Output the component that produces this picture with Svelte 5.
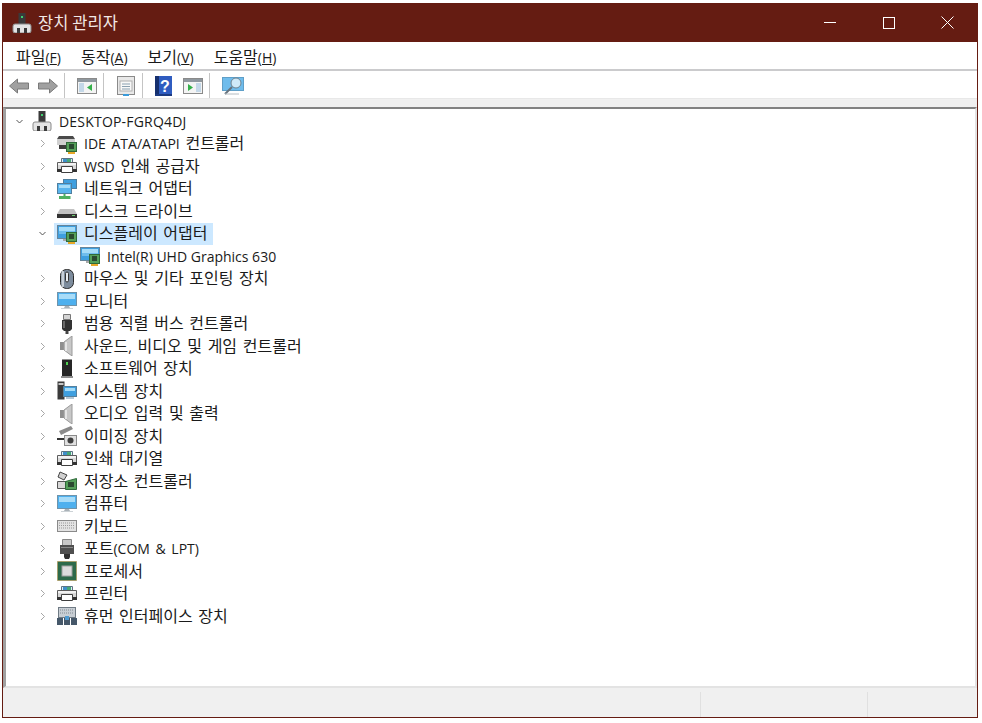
<svelte:options runes={true} />

<script>
  const devices = [
    { label: 'IDE ATA/ATAPI 컨트롤러', icon: 'ide' },
    { label: 'WSD 인쇄 공급자', icon: 'printer' },
    { label: '네트워크 어댑터', icon: 'network' },
    { label: '디스크 드라이브', icon: 'disk' },
    { label: '디스플레이 어댑터', icon: 'display', open: true, selected: true },
    { label: 'Intel(R) UHD Graphics 630', icon: 'display', child: true },
    { label: '마우스 및 기타 포인팅 장치', icon: 'mouse' },
    { label: '모니터', icon: 'monitor' },
    { label: '범용 직렬 버스 컨트롤러', icon: 'usb' },
    { label: '사운드, 비디오 및 게임 컨트롤러', icon: 'speaker' },
    { label: '소프트웨어 장치', icon: 'software' },
    { label: '시스템 장치', icon: 'system' },
    { label: '오디오 입력 및 출력', icon: 'speaker' },
    { label: '이미징 장치', icon: 'camera' },
    { label: '인쇄 대기열', icon: 'printer' },
    { label: '저장소 컨트롤러', icon: 'storage' },
    { label: '컴퓨터', icon: 'monitor' },
    { label: '키보드', icon: 'keyboard' },
    { label: '포트(COM & LPT)', icon: 'port' },
    { label: '프로세서', icon: 'cpu' },
    { label: '프린터', icon: 'printer' },
    { label: '휴먼 인터페이스 장치', icon: 'hid' },
  ]

  const menus = [
    ['파일', 'F'],
    ['동작', 'A'],
    ['보기', 'V'],
    ['도움말', 'H'],
  ]

  // hangul runs are set larger than latin ones, Malgun Gothic looks like that
  const runs = (s) => s.split(/([\uAC00-\uD7A3]+)/).filter(Boolean)
  const isHangul = (s) => /[\uAC00-\uD7A3]/.test(s)
</script>

{#snippet mixed(s)}
  {#each runs(s) as run}<span class:ko={isHangul(run)}>{run}</span>{/each}
{/snippet}

{#snippet screen()}
  <rect x="0.5" y="1.5" width="19" height="13" fill="#3f9fdf" stroke="#66859a" />
  <rect x="2" y="3" width="16" height="4" fill="#a5dcf8" />
  <rect x="2" y="7" width="16" height="3" fill="#6fbdec" />
{/snippet}

{#snippet board()}
  <rect x="9.5" y="8.5" width="10" height="9" fill="#55a05a" stroke="#2f6a3a" />
  <rect x="12" y="10" width="5" height="5" fill="#2a4a30" />
  <rect x="11" y="18" width="7" height="2" fill="#e8a828" />
{/snippet}

{#snippet tower()}
  <path d="M6.5 0h7v11h-7z" fill="#3a3a3a" />
  <rect x="9" y="3" width="2" height="2" fill="#3fd06f" />
  <path d="M3 11h14q2 0 2 2v5q0 2-2 2H3q-2 0-2-2v-5q0-2 2-2z" fill="#e4e4e4" stroke="#8a8a8a" />
  <rect x="5" y="15" width="3" height="5" fill="#3a3a3a" />
  <rect x="12" y="15" width="3" height="5" fill="#3a3a3a" />
{/snippet}

{#snippet icon(name)}
  <svg class="dev-icon" viewBox="0 0 20 20" aria-hidden="true">
    {#if name === 'ide'}
      <path d="M2 2h14l2 3H0z" fill="#4a4a4a" />
      <path d="M0 5h18v6H0z" fill="#d0d0d0" />
      <path d="M2 11h12v4H2z" fill="#3c3c3c" />
      {@render board()}
    {:else if name === 'printer'}
      <path d="M4.5 2.5h11v4h-11z" fill="#e4edf2" stroke="#5c7484" />
      <rect x="6" y="3" width="4" height="3" fill="#3f8fc8" />
      <rect x="10" y="3" width="4" height="3" fill="#45a878" />
      <path d="M0.5 6.5h19v8h-19z" fill="#d8d8d8" stroke="#5c5c5c" />
      <rect x="1" y="7" width="18" height="2" fill="#f2f2f2" />
      <path d="M4.5 10.5h11v6h-11z" fill="#fff" stroke="#3f3f3f" />
      <rect x="0" y="13" width="4" height="3" fill="#333" />
      <rect x="16" y="13" width="4" height="3" fill="#333" />
    {:else if name === 'network'}
      <rect x="6.5" y="0.5" width="13" height="9" fill="#3f9fdf" stroke="#4f7f9f" />
      <rect x="0.5" y="4.5" width="14" height="10" fill="#59b5ee" stroke="#4f7f9f" />
      <rect x="2" y="6" width="11" height="3" fill="#a5dcf8" />
      <path d="M6.5 15h2v2h5v3H2v-3h4.500z" fill="#4fb062" />
    {:else if name === 'disk'}
      <path d="M3 8h14l3 5H0z" fill="#c2c2c2" />
      <path d="M0 13h20v4H0z" fill="#333" />
      <rect x="15" y="14" width="3" height="1" fill="#6fd06f" />
    {:else if name === 'display'}
      {@render screen()}
      <rect x="6" y="15" width="8" height="2" fill="#a8a8a8" />
      {@render board()}
    {:else if name === 'mouse'}
      <rect x="3.5" y="0.5" width="13" height="19" rx="6" fill="#7d8c9d" stroke="#2a2a2a" />
      <rect x="4.5" y="2" width="2.5" height="16" rx="1" fill="#c8d0d8" />
      <rect x="8.5" y="3" width="3" height="10" rx="1.5" fill="#e8edf2" stroke="#333" />
    {:else if name === 'monitor'}
      <rect x="0.5" y="1.5" width="19" height="13" fill="#4eb0ee" stroke="#6f93aa" />
      <rect x="2" y="3" width="16" height="5" fill="#a8dcf8" />
      <path d="M8 15h4l1 2H7z" fill="#aab2b8" />
      <rect x="4" y="17" width="12" height="1" fill="#ccd2d6" />
    {:else if name === 'usb'}
      <path d="M6.5 0.5h7v5h-7z" fill="#d5d5d5" stroke="#777" />
      <path d="M5 6h10v9l-2 2H7l-2-2z" fill="#333" />
      <rect x="6" y="7" width="2" height="7" fill="#6a6a6a" />
      <rect x="8.500" y="17" width="3" height="3" fill="#444" />
    {:else if name === 'speaker'}
      <rect x="3" y="6" width="4" height="8" fill="#8f8f8f" />
      <path d="M7 6l8-6v20l-8-6z" fill="#c8c8c8" stroke="#9a9a9a" />
      <rect x="8" y="6" width="2" height="9" fill="#e6e6e6" />
    {:else if name === 'software'}
      <rect x="5" y="0.5" width="10" height="17" fill="#262626" />
      <rect x="9" y="3" width="2" height="3" fill="#4fd050" />
      <rect x="4" y="17" width="12" height="2" fill="#8e8e8e" />
    {:else if name === 'system'}
      <rect x="0.5" y="0.5" width="7" height="18" fill="#3a3a3a" />
      <rect x="1.5" y="2" width="5" height="2" fill="#c4c4c4" />
      <rect x="6.5" y="5.5" width="13" height="10" fill="#3f9fdf" stroke="#56809c" />
      <rect x="8" y="7" width="10" height="3" fill="#a5dcf8" />
      <rect x="9" y="16" width="8" height="2" fill="#b5c8d6" />
    {:else if name === 'camera'}
      <path d="M2 5l12-5 2 3-12 6z" fill="#8a8a8a" />
      <path d="M0 12h7v2H0z" fill="#333" />
      <rect x="7.5" y="9.5" width="12" height="10" fill="#e0e0e0" stroke="#8a8a8a" />
      <circle cx="13.5" cy="14.5" r="3" fill="#3f3f3f" />
    {:else if name === 'storage'}
      <path d="M3 1l7 3-3 5-6-3z" fill="#d0d0d0" stroke="#444" />
      <path d="M0.5 10.5h10v7h-10z" fill="#d8d8d8" stroke="#555" />
      <path d="M8.5 10.5l11-3v11h-11z" fill="#55a05a" stroke="#2f6a3a" />
      <rect x="11" y="11" width="6" height="5" fill="#2a4a30" />
    {:else if name === 'keyboard'}
      <rect x="0.5" y="4.5" width="19" height="11" fill="#e2e2e2" stroke="#8a8a8a" />
      <path d="M2 7h16M2 9.5h16M2 12h16" stroke="#9a9a9a" stroke-dasharray="1 1" />
    {:else if name === 'port'}
      <path d="M5.5 0.5h9v6h-9z" fill="#c8c8c8" stroke="#888" />
      <path d="M3 6h14v9H3z" fill="#4f4f4f" />
      <rect x="4" y="8" width="12" height="1" fill="#8a8a8a" />
      <path d="M7 15h6v3l-1 2H8l-1-2z" fill="#2f2f2f" />
    {:else if name === 'cpu'}
      <rect x="0.5" y="0.5" width="19" height="19" fill="#2d6a4a" stroke="#b58a3a" stroke-dasharray="1 1" />
      <rect x="1.5" y="1.5" width="17" height="17" fill="#2d6a4a" />
      <rect x="5" y="5" width="10" height="10" fill="#dcdcdc" stroke="#a0a0a0" />
    {:else if name === 'hid'}
      <rect x="1.5" y="1.5" width="17" height="10" fill="#c8ced4" stroke="#6f7a84" />
      <path d="M3 4h14M3 7h14" stroke="#808a92" stroke-dasharray="1 1" />
      <path d="M0 12h6v7H0zM7 12h6v7H7zM14 12h6v7h-6z" fill="#46586a" />
      <rect x="8" y="10" width="4" height="4" fill="#4f9ad0" />
    {/if}
  </svg>
{/snippet}

{#snippet chevron(open)}
  <svg class="chevron" viewBox="0 0 9 9" aria-hidden="true">
    {#if open}
      <path d="M1.5 3l3 3 3-3" fill="none" stroke="#555" />
    {:else}
      <path d="M3 1l3.5 3.5L3 8" fill="none" stroke="#a6a6a6" />
    {/if}
  </svg>
{/snippet}

<div class="window">
  <header class="titlebar">
    <svg class="title-icon" viewBox="0 0 20 20" aria-hidden="true">{@render tower()}</svg>
    <span class="title">{@render mixed('장치 관리자')}</span>
    <div class="controls">
      <button aria-label="최소화"><span class="min"></span></button>
      <button aria-label="최대화"><span class="max"></span></button>
      <button aria-label="닫기">
        <svg viewBox="0 0 13 13" width="13" height="13"><path d="M0.5 0.5l12 12M12.5 0.5l-12 12" stroke="#fff" fill="none" /></svg>
      </button>
    </div>
  </header>

  <nav class="menubar">
    {#each menus as [name, key]}
      <span class="menu"><span class="ko">{name}</span><small>(<u>{key}</u>)</small></span>
    {/each}
  </nav>

  <div class="toolbar">
    <svg class="tool arrow" viewBox="0 0 20 16" aria-hidden="true"><path d="M0.5 8l8-7v4h11v6h-11v4z" fill="#a0a0a0" stroke="#7a7a7a" /></svg>
    <svg class="tool arrow second" viewBox="0 0 20 16" aria-hidden="true"><path d="M19.5 8l-8-7v4H0.5v6h11v4z" fill="#a0a0a0" stroke="#7a7a7a" /></svg>
    <i class="sep"></i>
    <svg class="tool" viewBox="0 0 20 20" aria-hidden="true">
      <rect x="0.5" y="2.5" width="19" height="15" fill="#f4f4f4" stroke="#8a8a8a" />
      <rect x="1" y="3" width="18" height="3" fill="#8f989f" />
      <rect x="2" y="7" width="5" height="9" fill="#c4d8e8" />
      <path d="M15 8v7l-5-3.5z" fill="#35b04a" />
    </svg>
    <i class="sep"></i>
    <svg class="tool" viewBox="0 0 20 20" aria-hidden="true">
      <rect x="1.5" y="0.5" width="17" height="18" fill="#e8e8e8" stroke="#8a8a8a" />
      <rect x="4" y="5" width="12" height="10" fill="#f8f8f8" stroke="#b0b0b0" />
      <path d="M6 8h8M6 10.5h8M6 13h8" stroke="#8aa0b0" />
      <rect x="7" y="18" width="6" height="2" fill="#3a9ad9" />
    </svg>
    <i class="sep"></i>
    <svg class="tool help-icon" viewBox="0 0 17 20" aria-hidden="true">
      <rect width="17" height="20" fill="#2f5cc0" />
      <rect width="4" height="20" fill="#16306e" />
      <rect y="18" width="17" height="2" fill="#1c3a80" />
      <text x="10" y="16" class="help">?</text>
    </svg>
    <svg class="tool" viewBox="0 0 20 20" aria-hidden="true">
      <rect x="0.5" y="2.5" width="19" height="15" fill="#f4f4f4" stroke="#8a8a8a" />
      <rect x="1" y="3" width="18" height="3" fill="#8f989f" />
      <rect x="13" y="7" width="5" height="9" fill="#c4d8e8" />
      <path d="M5 8v7l5-3.5z" fill="#35b04a" />
    </svg>
    <i class="sep"></i>
    <svg class="tool wide" viewBox="0 0 22 20" aria-hidden="true">
      <rect x="0.5" y="1.5" width="21" height="13" fill="#6fbcec" stroke="#5f9fc8" />
      <circle cx="14" cy="7" r="5" fill="#cfe9f8" stroke="#6f8390" />
      <path d="M10 11l-7 7" stroke="#66727c" stroke-width="2" />
      <path d="M3 18h14" stroke="#b5bcc2" />
    </svg>
  </div>

  <div class="tree-frame">
    <div class="tree">
      <div class="row root">
        {@render chevron(true)}
        <svg class="root-icon" viewBox="0 0 20 20" aria-hidden="true">{@render tower()}</svg>
        <span class="label latin name">DESKTOP-FGRQ4DJ</span>
      </div>
      {#each devices as d}
        <div class="row" class:child={d.child}>
          {#if !d.child}
            {@render chevron(!!d.open)}
          {/if}
          <div class="item" class:selected={d.selected}>
            {@render icon(d.icon)}
            <span class="label" class:latin={d.child}>{@render mixed(d.label)}</span>
          </div>
        </div>
      {/each}
    </div>
  </div>

  <footer class="status">
    <div class="pane grow"></div>
    <div class="pane mid"></div>
    <div class="pane end"></div>
  </footer>
</div>

<style>
  :global(body) {
    background: #fff;
  }

  .window {
    box-sizing: border-box;
    width: 976px;
    height: 715px;
    margin: 3px 0 0 2px;
    display: flex;
    flex-direction: column;
    background: #fff;
    border: solid #651c12;
    border-width: 0 1px 1px 1px;
    font-family: 'Open Sans', 'Noto Sans CJK KR', sans-serif;
    color: #1a1a1a;
  }

  .titlebar {
    height: 39px;
    flex: none;
    display: flex;
    align-items: center;
    background: #651c12;
    color: #fff;
  }

  .title-icon {
    width: 20px;
    height: 20px;
    margin-left: 9px;
    flex: none;
  }

  .title {
    margin: 0 0 2px 6px;
    font-size: 15px;
    color: #f2e8e6;
  }

  .title :global(.ko) {
    font-size: 16.5px;
  }

  .controls {
    margin-left: auto;
    display: flex;
  }

  .controls button {
    width: 59px;
    height: 39px;
    padding: 0;
    border: none;
    background: none;
    display: flex;
    align-items: center;
    justify-content: center;
  }

  .min {
    width: 12px;
    height: 1px;
    background: #fff;
  }

  .max {
    box-sizing: border-box;
    width: 12px;
    height: 12px;
    border: 1px solid #fff;
  }

  .menubar {
    height: 29px;
    flex: none;
    display: flex;
    align-items: center;
    padding-left: 13px;
    gap: 20px;
    box-sizing: border-box;
    border-bottom: 2px solid #cbcbcd;
    font-size: 14px;
  }

  .menu .ko {
    font-size: 16px;
  }

  .menu small {
    font-size: 14px;
  }

  .toolbar {
    height: 28px;
    flex: none;
    display: flex;
    align-items: center;
    box-sizing: border-box;
    padding: 2px 0 0 6px;
    border-bottom: 1px solid #e8e8e8;
  }

  .tool {
    width: 20px;
    height: 20px;
    flex: none;
  }

  .arrow {
    height: 16px;
  }

  .second {
    margin-left: 9px;
  }

  .help-icon {
    width: 17px;
    margin-right: 11px;
  }

  .wide {
    width: 22px;
  }

  .sep {
    width: 1px;
    height: 25px;
    margin: 0 12px 0 6px;
    background: #c4c4c4;
  }

  .help {
    font: bold 16px 'Liberation Sans', sans-serif;
    fill: #fff;
    text-anchor: middle;
  }

  .tree-frame {
    flex: 1;
    min-height: 0;
    background: #f0f0f0;
    padding-top: 8px;
    display: flex;
    flex-direction: column;
  }

  .tree {
    flex: 1;
    box-sizing: border-box;
    background: #fff;
    border: 2px solid #e3e3e3;
    border-left: 3px solid #a0a0a0;
    border-top-color: #828282;
    padding-top: 1px;
  }

  .row {
    height: 22.5px;
    display: flex;
    align-items: center;
    padding-left: 32px;
  }

  .row.root {
    padding-left: 9px;
  }

  .row.child {
    padding-left: 71px;
  }

  .chevron {
    width: 9px;
    height: 9px;
    flex: none;
    margin-right: 7px;
  }

  .root .chevron {
    margin-right: 8px;
  }

  .root-icon {
    width: 20px;
    height: 20px;
    margin-right: 7px;
    flex: none;
  }

  .item {
    display: flex;
    align-items: center;
    height: 22px;
    padding-right: 6px;
  }

  .item.selected {
    background: #cce8ff;
  }

  .dev-icon {
    width: 20px;
    height: 20px;
    margin: 0 7px 0 3px;
    flex: none;
  }

  .label {
    font-size: 14px;
    white-space: nowrap;
    line-height: 22px;
    word-spacing: 2px;
  }

  .label :global(.ko) {
    font-size: 16px;
  }

  .label.latin {
    word-spacing: 0;
    margin-top: 2px;
  }

  .name {
    letter-spacing: 0.2px;
  }

  .status {
    height: 29px;
    flex: none;
    display: flex;
    background: #f0f0f0;
    padding-top: 4px;
    box-sizing: border-box;
  }

  .pane {
    border-right: 1px solid #e0e0e0;
  }

  .grow {
    flex: 1;
  }

  .mid {
    width: 166px;
  }

  .end {
    width: 109px;
    flex: none;
    border-right: none;
  }
</style>
